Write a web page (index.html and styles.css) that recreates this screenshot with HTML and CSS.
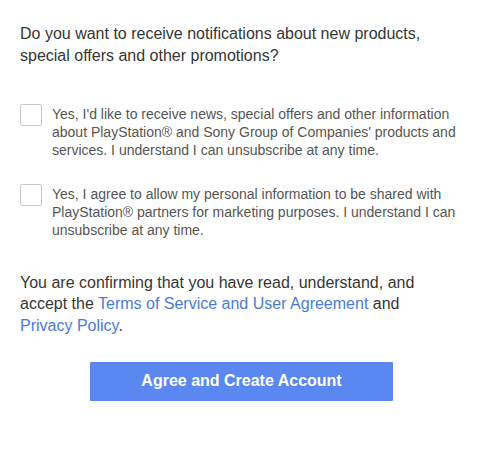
FILE: index.html
```html
<!DOCTYPE html>
<html lang="en">
<head>
  <meta charset="UTF-8">
  <meta name="viewport" content="width=device-width, initial-scale=1.0">
  <title>Marketing preferences</title>
  <link rel="stylesheet" href="styles.css">
</head>
<body>
  <div class="consent">
    <h2 class="question">Do you want to receive notifications about new products, special offers and other promotions?</h2>

    <ul class="options">
      <li class="option">
        <span class="box"></span>
        <p>Yes, I'd like to receive news, special offers and other information about PlayStation® and Sony Group of Companies' products and services. I understand I can unsubscribe at any time.</p>
      </li>
      <li class="option">
        <span class="box"></span>
        <p>Yes, I agree to allow my personal information to be shared with PlayStation® partners for marketing purposes. I understand I can unsubscribe at any time.</p>
      </li>
    </ul>

    <p class="confirm">You are confirming that you have read, understand, and accept the <a href="#">Terms of Service and User Agreement</a> and <a href="#">Privacy Policy</a>.</p>

    <div class="actions">
      <button class="submit" type="button">Agree and Create Account</button>
    </div>
  </div>
</body>
</html>
```

FILE: styles.css
```css
* {
  margin: 0;
  padding: 0;
  box-sizing: border-box;
}

body {
  font-family: 'Liberation Sans', Arial, sans-serif;
  background: #fff;
  color: #363636;
}

.consent {
  width: 462px;
  padding: 23px 0 0 20px;
}

.question {
  font-size: 16px;
  font-weight: normal;
  line-height: 22px;
  color: #363636;
}

.options {
  list-style: none;
  margin-top: 38px;
  display: flex;
  flex-direction: column;
  gap: 26px;
}

.option {
  display: flex;
  align-items: flex-start;
  gap: 10px;
}

.box {
  flex: none;
  width: 22px;
  height: 22px;
  border: 1px solid #c8c8c8;
  border-radius: 2px;
  background: #fff;
  margin-top: -1px;
}

.option p {
  font-size: 14px;
  line-height: 18px;
  color: #555;
}

.confirm {
  margin-top: 33px;
  font-size: 16px;
  line-height: 21.3px;
  color: #363636;
}

.confirm a {
  color: #4a7bdc;
  text-decoration: none;
  white-space: nowrap;
}

.actions {
  margin-top: 26px;
  padding-left: 70px;
}

.submit {
  width: 303px;
  height: 39px;
  border: none;
  border-radius: 1px;
  background: #5a88f0;
  color: #fff;
  font-family: 'Liberation Sans', Arial, sans-serif;
  font-size: 16px;
  font-weight: bold;
  cursor: pointer;
}
```
